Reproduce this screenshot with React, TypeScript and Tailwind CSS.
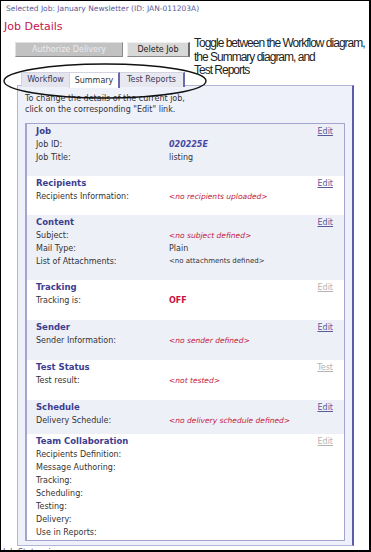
type Tone = "plain" | "id" | "empty" | "off" | "small";

interface Row {
  label: string;
  value?: string;
  tone?: Tone;
}

interface Section {
  title: string;
  action: string;
  disabled?: boolean;
  tinted?: boolean;
  rows: Row[];
  pb: string;
}

const sections: Section[] = [
  {
    title: "Job",
    action: "Edit",
    tinted: true,
    pb: "pb-[12px]",
    rows: [
      { label: "Job ID:", value: "020225E", tone: "id" },
      { label: "Job Title:", value: "listing" },
    ],
  },
  {
    title: "Recipients",
    action: "Edit",
    pb: "pb-[12px]",
    rows: [{ label: "Recipients Information:", value: "<no recipients uploaded>", tone: "empty" }],
  },
  {
    title: "Content",
    action: "Edit",
    tinted: true,
    pb: "pb-[12px]",
    rows: [
      { label: "Subject:", value: "<no subject defined>", tone: "empty" },
      { label: "Mail Type:", value: "Plain" },
      { label: "List of Attachments:", value: "<no attachments defined>", tone: "small" },
    ],
  },
  {
    title: "Tracking",
    action: "Edit",
    disabled: true,
    pb: "pb-[13px]",
    rows: [{ label: "Tracking is:", value: "OFF", tone: "off" }],
  },
  {
    title: "Sender",
    action: "Edit",
    tinted: true,
    pb: "pb-[13px]",
    rows: [{ label: "Sender Information:", value: "<no sender defined>", tone: "empty" }],
  },
  {
    title: "Test Status",
    action: "Test",
    disabled: true,
    pb: "pb-[13px]",
    rows: [{ label: "Test result:", value: "<not tested>", tone: "empty" }],
  },
  {
    title: "Schedule",
    action: "Edit",
    tinted: true,
    pb: "pb-[7px]",
    rows: [{ label: "Delivery Schedule:", value: "<no delivery schedule defined>", tone: "empty" }],
  },
  {
    title: "Team Collaboration",
    action: "Edit",
    disabled: true,
    pb: "pb-[1px]",
    rows: [
      { label: "Recipients Definition:" },
      { label: "Message Authoring:" },
      { label: "Tracking:" },
      { label: "Scheduling:" },
      { label: "Testing:" },
      { label: "Delivery:" },
      { label: "Use in Reports:" },
    ],
  },
];

const toneClass: Record<Tone, string> = {
  plain: "text-[#333333]",
  id: "font-bold italic text-[#4848a0]",
  empty: "italic text-[#c2203c] text-[7.5px]",
  off: "font-bold text-[#c8103c]",
  small: "text-[#333333] text-[7px]",
};

export default function App() {
  return (
    <div
      className="relative w-[371px] h-[552px] overflow-hidden bg-white border-l border-t border-r-2 border-b-2 border-black text-[8px]"
      style={{ fontFamily: '"DejaVu Sans", Verdana, sans-serif' }}
    >
      {/* Breadcrumb */}
      <div className="pl-[5px] pt-[3px] text-[7.5px] leading-[10px] text-[#5a5a9a] whitespace-nowrap">
        Selected Job: January Newsletter (ID: JAN-011203A)
      </div>

      <h1 className="mt-[5px] pl-[3px] text-[11px] leading-[16px] text-[#c8124e]">Job Details</h1>

      {/* Action buttons */}
      <div className="mt-[7px] pl-[14px] flex gap-[4px]">
        <div className="w-[108px] h-[15px] flex items-center justify-center bg-[#c2c2c2] border-t border-l border-[#e0e0e0] border-r border-b border-r-[#8a8a8a] border-b-[#8a8a8a] text-[#ececec]">
          Authorize Delivery
        </div>
        <div className="w-[63px] h-[15px] flex items-center justify-center bg-[#d8d8d8] border-t border-l border-[#f0f0f0] border-r-2 border-b border-r-[#6a6a6a] border-b-[#8a8a8a] text-[#222222]">
          Delete Job
        </div>
      </div>

      {/* Tabs */}
      <div className="mt-[15px] pl-[20px] flex h-[13px] relative z-10">
        <div className="w-[48px] h-[15px] flex items-center justify-center bg-[#e4e4ee] border-t border-l border-[#d4d4e0] text-[#3a3a5a]">
          Workflow
        </div>
        <div className="w-[51px] h-[16px] flex items-center justify-center bg-white border-t border-l border-[#d4d4e0] border-r-2 border-r-[#6a6aaa] text-[#333333]">
          Summary
        </div>
        <div className="w-[65px] h-[15px] flex items-center justify-center bg-[#e8e8f0] border-t border-[#d4d4e0] border-r-2 border-r-[#6a6aaa] text-[#3a3a5a]">
          Test Reports
        </div>
      </div>

      {/* Panel */}
      <div className="ml-[16px] w-[337px] h-[461px] bg-[#eef0fa] border-t border-l border-b border-[#b4b4da] border-r-2 border-r-[#5c5ca8] pt-[7px] pb-[3px]">
        <p className="pl-[7px] leading-[11px] text-[#333333]">
          To change the details of the current job,
          <br />
          click on the corresponding "Edit" link.
        </p>

        <div className="mt-[8px] ml-[7px] w-[320px] border border-l-2 border-[#a4a4cc] bg-white">
          {sections.map((s) => (
            <div key={s.title} className={`pt-[1px] ${s.pb} ${s.tinted ? "bg-[#eef0f8]" : "bg-white"}`}>
              <div className="flex justify-between pl-[9px] pr-[11px] leading-[13px]">
                <span className="font-bold text-[#3d3d8f] text-[8.5px]">{s.title}</span>
                <span className={`underline ${s.disabled ? "text-[#b4b4b4]" : "text-[#5a5a9a]"}`}>{s.action}</span>
              </div>
              {s.rows.map((r) => (
                <div key={r.label} className="grid grid-cols-[133px_1fr] pl-[9px] leading-[13px] text-[#333333]">
                  <span>{r.label}</span>
                  <span className={toneClass[r.tone ?? "plain"]}>{r.value}</span>
                </div>
              ))}
            </div>
          ))}
        </div>
      </div>

      <div className="mt-[2px] pl-[2px] text-[#555555] leading-[10px]">Job Status: in progress</div>

      {/* Annotation */}
      <div
        className="absolute left-[193px] top-[36px] text-[12px] leading-[13.5px] tracking-[-1px] text-[#222222] whitespace-nowrap"
        style={{ fontFamily: '"Liberation Sans", Arial, sans-serif' }}
      >
        Toggle between the Workflow diagram,
        <br />
        the Summary diagram, and
        <br />
        Test Reports
      </div>

      <svg className="absolute left-0 top-[60px] z-20" width="212" height="42" viewBox="0 0 212 42">
        <ellipse cx="104" cy="20" rx="101" ry="17" fill="none" stroke="#111111" strokeWidth="1.4" />
      </svg>
    </div>
  );
}
